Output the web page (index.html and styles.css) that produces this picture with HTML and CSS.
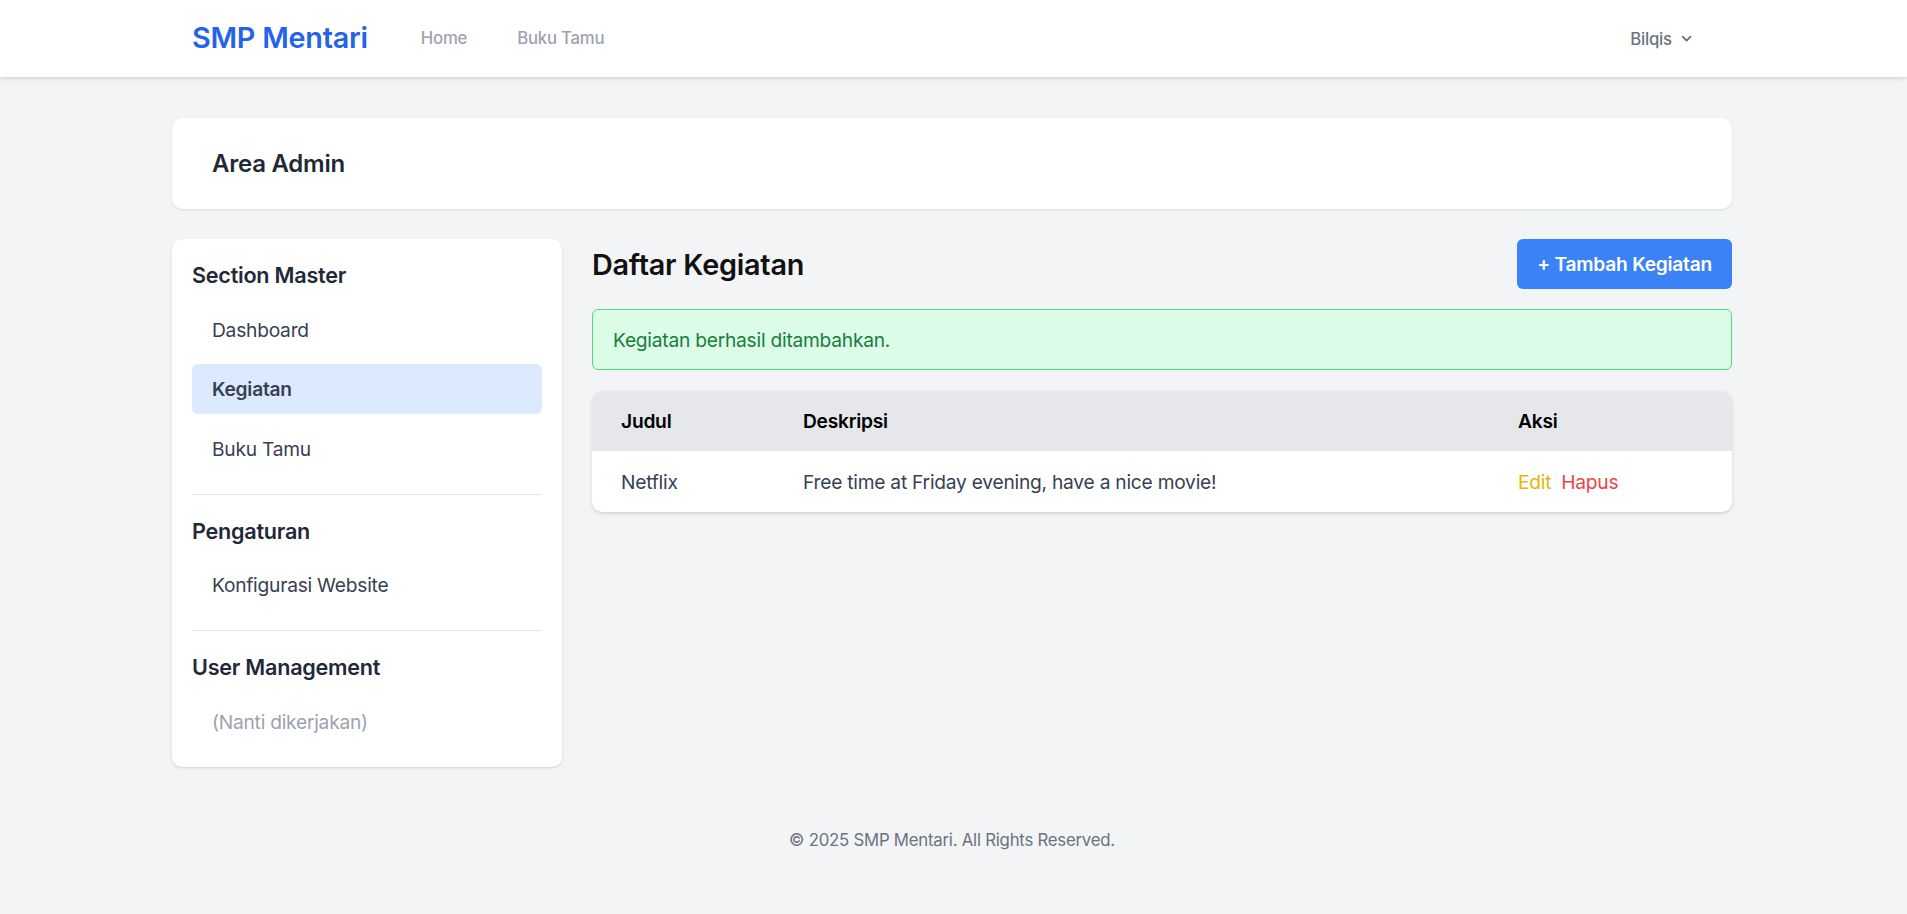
FILE: index.html
```html
<!DOCTYPE html>
<html lang="id">
<head>
<meta charset="utf-8">
<title>SMP Mentari - Daftar Kegiatan</title>
<link rel="stylesheet" href="styles.css">
</head>
<body>
<nav class="topnav">
  <div class="topnav-inner">
    <div class="nav-left">
      <a class="logo" href="#">SMP Mentari</a>
      <div class="nav-links">
        <a href="#">Home</a>
        <a href="#">Buku Tamu</a>
      </div>
    </div>
    <button class="user-btn">
      <span>Bilqis</span>
      <svg class="chev" viewBox="0 0 20 20" fill="currentColor"><path fill-rule="evenodd" d="M5.293 7.293a1 1 0 011.414 0L10 10.586l3.293-3.293a1 1 0 111.414 1.414l-4 4a1 1 0 01-1.414 0l-4-4a1 1 0 010-1.414z" clip-rule="evenodd"/></svg>
    </button>
  </div>
</nav>

<header class="page-header">
  <h2>Area Admin</h2>
</header>

<div class="layout">
  <aside class="sidebar">
    <div class="side-section">
      <h3>Section Master</h3>
      <ul>
        <li><a href="#">Dashboard</a></li>
        <li><a class="active" href="#">Kegiatan</a></li>
        <li><a href="#">Buku Tamu</a></li>
      </ul>
    </div>
    <div class="side-section bordered">
      <h3>Pengaturan</h3>
      <ul>
        <li><a href="#">Konfigurasi Website</a></li>
      </ul>
    </div>
    <div class="side-section bordered">
      <h3>User Management</h3>
      <ul>
        <li><span class="muted">(Nanti dikerjakan)</span></li>
      </ul>
    </div>
  </aside>

  <main class="main">
    <div class="title-row">
      <h1>Daftar Kegiatan</h1>
      <a class="btn-primary" href="#">+ Tambah Kegiatan</a>
    </div>
    <div class="alert-success">Kegiatan berhasil ditambahkan.</div>
    <table class="data-table">
      <colgroup>
        <col class="c1"><col class="c2"><col class="c3">
      </colgroup>
      <thead>
        <tr><th>Judul</th><th>Deskripsi</th><th>Aksi</th></tr>
      </thead>
      <tbody>
        <tr>
          <td>Netflix</td>
          <td>Free time at Friday evening, have a nice movie!</td>
          <td><a class="act-edit" href="#">Edit</a><a class="act-del" href="#">Hapus</a></td>
        </tr>
      </tbody>
    </table>
  </main>
</div>

<footer class="footer">© 2025 SMP Mentari. All Rights Reserved.</footer>
</body>
</html>
```

FILE: styles.css
```css
* { box-sizing: border-box; }
html, body { margin: 0; padding: 0; }
body {
  background: #f3f4f6;
  font-family: Inter, "Noto Sans", sans-serif;
  letter-spacing: -0.015em;
  color: #1f2937;
  min-height: 914px;
  padding-right: 3px;
}
a { text-decoration: none; }
h1, h2, h3 { margin: 0; }
ul { list-style: none; margin: 0; padding: 0; }

.topnav {
  background: #fff;
  height: 77px;
  margin-right: -3px;
  box-shadow: 0 1px 3px rgba(0,0,0,0.10), 0 2px 6px rgba(0,0,0,0.06);
}
.topnav-inner {
  width: 1560px;
  margin: 0 auto;
  height: 100%;
  padding: 0 19px 0 20px;
  display: flex;
  align-items: center;
  justify-content: space-between;
  position: relative;
  left: -1.5px;
}
.nav-left { display: flex; align-items: center; }
.logo {
  font-size: 28.8px;
  font-weight: 600;
  color: #2563eb;
  line-height: 1;
}
.nav-links { display: flex; gap: 50px; margin-left: 53px; }
.nav-links a {
  font-size: 16.8px;
  font-weight: 500;
  color: #9ca3af;
}
.user-btn {
  display: flex;
  align-items: center;
  gap: 5px;
  background: none;
  border: 0;
  padding: 0 17px 0 0;
  font-family: inherit;
  letter-spacing: inherit;
  font-size: 16.8px;
  font-weight: 500;
  color: #6b7280;
}
.chev { width: 19.2px; height: 19.2px; }

.page-header {
  width: 1560px;
  margin: 41px auto 0;
  height: 91px;
  background: #fff;
  border-radius: 10px;
  box-shadow: 0 1px 3px rgba(0,0,0,0.08), 0 1px 2px rgba(0,0,0,0.04);
  padding: 0 40px;
  display: flex;
  align-items: center;
}
.page-header h2 {
  font-size: 24px;
  font-weight: 600;
  color: #1f2937;
}

.layout {
  width: 1560px;
  margin: 30px auto 0;
  display: flex;
  gap: 30px;
  align-items: flex-start;
}
.sidebar {
  width: 390px;
  flex: none;
  background: #fff;
  border-radius: 10px;
  box-shadow: 0 1px 3px rgba(0,0,0,0.10), 0 1px 2px rgba(0,0,0,0.06);
  padding: 20px;
}
.side-section h3 {
  font-size: 21.6px;
  font-weight: 600;
  line-height: 33.6px;
  color: #1f2937;
  margin-bottom: 12px;
}
.side-section ul { display: flex; flex-direction: column; gap: 9.6px; }
.side-section li a,
.side-section li .muted {
  display: block;
  padding: 10px 20px;
  line-height: 30px;
  font-size: 19.2px;
  color: #374151;
  border-radius: 6px;
}
.side-section li a.active {
  background: #dbeafe;
  font-weight: 600;
}
.side-section li .muted { color: #9ca3af; }
.side-section.bordered {
  margin-top: 20px;
  padding-top: 20px;
  border-top: 1px solid #e5e7eb;
}

.main { flex: 1; min-width: 0; }
.title-row {
  display: flex;
  justify-content: space-between;
  align-items: center;
  height: 50px;
}
.title-row h1 {
  font-size: 28.8px;
  font-weight: 600;
  color: #111;
}
.btn-primary {
  display: flex;
  align-items: center;
  height: 50px;
  padding: 0 20px;
  background: #3b82f6;
  color: #fff;
  font-size: 19.2px;
  font-weight: 600;
  border-radius: 6px;
}
.alert-success {
  margin-top: 20px;
  height: 61px;
  display: flex;
  align-items: center;
  padding: 0 20px;
  background: #dcfce7;
  border: 1px solid #4ade80;
  border-radius: 6px;
  color: #15803d;
  font-size: 19.2px;
}
.data-table {
  margin-top: 21px;
  width: 100%;
  table-layout: fixed;
  border-collapse: separate;
  border-spacing: 0;
  background: #fff;
  border-radius: 10px;
  overflow: hidden;
  box-shadow: 0 2px 4px rgba(0,0,0,0.10), 0 1px 2px rgba(0,0,0,0.06);
}
.data-table col.c1 { width: 182px; }
.data-table col.c2 { width: 715px; }
.data-table th {
  background: #e5e7eb;
  height: 60px;
  padding: 0 29px;
  text-align: left;
  font-size: 19.2px;
  font-weight: 600;
  color: #000;
}
.data-table td {
  height: 61px;
  padding: 0 29px;
  font-size: 19.2px;
  color: #374151;
}
.act-edit { color: #eab308; margin-right: 10px; }
.act-del { color: #ef4444; }

.footer {
  margin-top: 61px;
  text-align: center;
  font-size: 16.8px;
  line-height: 24px;
  color: #6b7280;
  padding-bottom: 30px;
}
```
